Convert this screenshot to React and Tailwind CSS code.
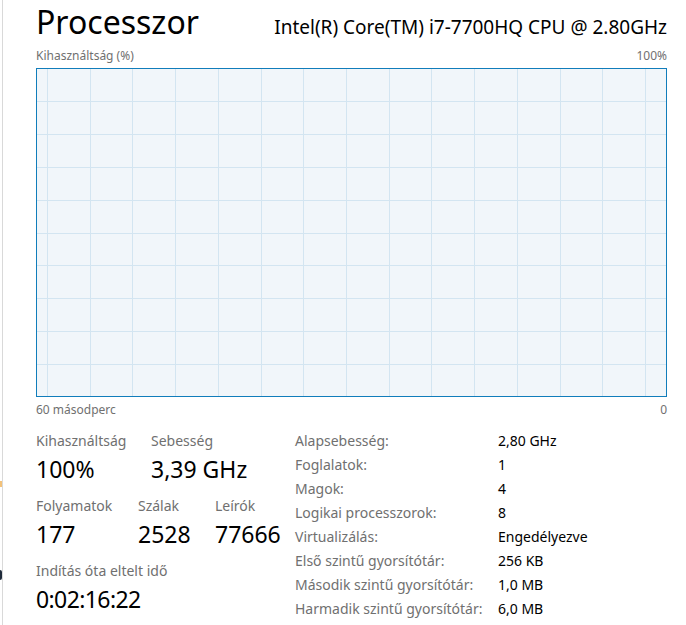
import React from 'react';

const rows = [
  ['Alapsebesség:', '2,80 GHz'],
  ['Foglalatok:', '1'],
  ['Magok:', '4'],
  ['Logikai processzorok:', '8'],
  ['Virtualizálás:', 'Engedélyezve'],
  ['Első szintű gyorsítótár:', '256 KB'],
  ['Második szintű gyorsítótár:', '1,0 MB'],
  ['Harmadik szintű gyorsítótár:', '6,0 MB'],
];

const UsageGraph = () => {
  const w = 629;
  const h = 327;
  const vLines = Array.from({ length: 15 }, (_, i) => Math.round(10 + i * 42.71) + 0.5);
  const hLines = Array.from({ length: 9 }, (_, i) => Math.round(32 + i * 32.875) + 0.5);
  return (
    <svg width={w} height={h} className="block" shapeRendering="crispEdges">
      <rect width={w} height={h} fill="#f1f6fa" />
      {vLines.map(x => (
        <line key={'v' + x} x1={x} y1={0} x2={x} y2={h} stroke="#d3e5f1" strokeWidth={1} />
      ))}
      {hLines.map(y => (
        <line key={'h' + y} x1={0} y1={y} x2={w} y2={y} stroke="#d3e5f1" strokeWidth={1} />
      ))}
    </svg>
  );
};

const Stat = ({ label, value, width, valueClass = '' }) => (
  <div className={width}>
    <div className="text-[14px] leading-[20px] text-[#707070]">{label}</div>
    <div className={`text-[23px] leading-[32px] mt-[2px] text-black ${valueClass}`}>{value}</div>
  </div>
);

export default function App() {
  return (
    <div className="w-[686px] h-[625px] bg-white flex font-['Noto_Sans',sans-serif] overflow-hidden">
      {/* clipped sidebar edge */}
      <div className="w-[2px] shrink-0 flex flex-col">
        <div className="h-[481px]" />
        <div className="h-[6px] w-[2px] bg-[#f3c27a]" />
        <div className="h-[83px]" />
        <div className="h-[10px] w-[2px] border-r-2 border-[#1e2a3a] rounded-r-sm" />
      </div>
      <div className="w-[1px] shrink-0 bg-[#d9d9d9]" />

      <div className="flex flex-col pl-[33px] w-[664px]">
        {/* Header */}
        <div className="flex items-baseline justify-between">
          <h1 className="text-[32px] leading-[44px] text-black">Processzor</h1>
          <div className="text-[19px] leading-[24px] text-black">Intel(R) Core(TM) i7-7700HQ CPU @ 2.80GHz</div>
        </div>

        {/* Graph */}
        <div className="flex justify-between text-[12px] leading-[16px] text-[#707070] mt-[4px]">
          <span>Kihasználtság (%)</span>
          <span>100%</span>
        </div>
        <div className="mt-[4px] w-[631px] border border-[#117dbb]">
          <UsageGraph />
        </div>
        <div className="flex justify-between text-[12px] leading-[16px] text-[#707070] mt-[5px] w-[631px]">
          <span>60 másodperc</span>
          <span>0</span>
        </div>

        {/* Details */}
        <div className="flex mt-[11px]">
          <div className="w-[259px] flex flex-col gap-[11px] pt-[2px]">
            <div className="flex">
              <Stat label="Kihasználtság" value="100%" width="w-[115px]" />
              <Stat label="Sebesség" value="3,39 GHz" width="w-[120px]" />
            </div>
            <div className="flex">
              <Stat label="Folyamatok" value="177" width="w-[102px]" />
              <Stat label="Szálak" value="2528" width="w-[77px]" />
              <Stat label="Leírók" value="77666" width="w-[80px]" />
            </div>
            <Stat label="Indítás óta eltelt idő" value="0:02:16:22" width="w-[240px]" valueClass="tracking-[-0.6px]" />
          </div>
          <div className="grid grid-cols-[203px_auto] text-[14px] leading-[24px]">
            {rows.map(([k, v]) => (
              <React.Fragment key={k}>
                <span className="text-[#707070] whitespace-nowrap">{k}</span>
                <span className="text-black">{v}</span>
              </React.Fragment>
            ))}
          </div>
        </div>
      </div>
    </div>
  );
}
